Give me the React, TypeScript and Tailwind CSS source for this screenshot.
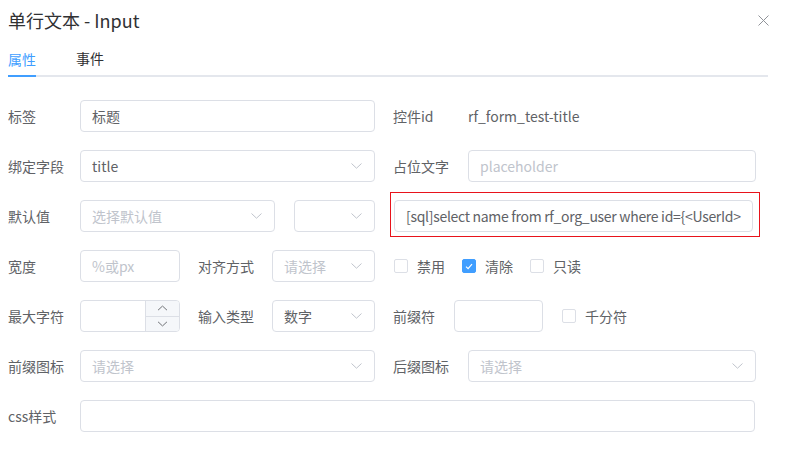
import { useState } from "react";

const FONT = { fontFamily: '"Noto Sans CJK SC", "Noto Sans", sans-serif' };

function Chevron({ up = false, className = "" }: { up?: boolean; className?: string }) {
  return (
    <svg width="11" height="6" viewBox="0 0 11 6" className={className}>
      <path
        d={up ? "M0.5 5.5 L5.5 0.8 L10.5 5.5" : "M0.5 0.5 L5.5 5.2 L10.5 0.5"}
        fill="none"
        stroke="currentColor"
        strokeWidth="1"
      />
    </svg>
  );
}

function TextBox({
  value,
  placeholder,
  className = "",
}: {
  value?: string;
  placeholder?: string;
  className?: string;
}) {
  return (
    <div
      className={`flex h-8 items-center overflow-hidden rounded border border-[#dcdfe6] bg-white px-[11px] text-sm ${className}`}
    >
      {value ? (
        <span className="whitespace-nowrap text-[#606266]">{value}</span>
      ) : (
        <span className="whitespace-nowrap text-[#c0c4cc]">{placeholder}</span>
      )}
    </div>
  );
}

function Select({
  value,
  placeholder,
  className = "",
}: {
  value?: string;
  placeholder?: string;
  className?: string;
}) {
  return (
    <div
      className={`flex h-8 items-center justify-between rounded border border-[#dcdfe6] bg-white pl-[11px] pr-[12px] text-sm ${className}`}
    >
      {value ? (
        <span className="whitespace-nowrap text-[#606266]">{value}</span>
      ) : (
        <span className="whitespace-nowrap text-[#c0c4cc]">{placeholder}</span>
      )}
      <Chevron className="shrink-0 text-[#c0c4cc]" />
    </div>
  );
}

function Check({ label, checked = false }: { label: string; checked?: boolean }) {
  return (
    <label className="flex items-center gap-[9px] text-sm text-[#606266]">
      <span
        className={`flex h-[14px] w-[14px] items-center justify-center rounded-[2px] border ${
          checked ? "border-[#409eff] bg-[#409eff]" : "border-[#dcdfe6] bg-white"
        }`}
      >
        {checked && (
          <svg width="8" height="7" viewBox="0 0 8 7">
            <path d="M1 3.6 L3.1 5.6 L7 1.2" fill="none" stroke="#fff" strokeWidth="1.2" />
          </svg>
        )}
      </span>
      {label}
    </label>
  );
}

function Label({ text, className = "w-[72px]" }: { text: string; className?: string }) {
  return <div className={`shrink-0 text-sm text-[#606266] ${className}`}>{text}</div>;
}

export default function App() {
  const [tab] = useState("属性");

  return (
    <div className="h-[459px] w-[785px] overflow-hidden bg-white px-2" style={FONT}>
      <div className="flex h-[40px] items-center justify-between">
        <h1 className="text-lg text-[#303133]">单行文本 - Input</h1>
        <svg width="11" height="11" viewBox="0 0 11 11" className="mr-[8px] text-[#909399]">
          <path d="M0.5 0.5 L10.5 10.5 M10.5 0.5 L0.5 10.5" stroke="currentColor" strokeWidth="1" />
        </svg>
      </div>

      <div className="mr-[9px] flex h-[37px] items-end border-b-2 border-[#e4e7ed] text-sm">
        <div
          className={`-mb-[2px] flex h-full items-center border-b-2 ${
            tab === "属性" ? "border-[#409eff] text-[#409eff]" : "border-transparent"
          }`}
        >
          属性
        </div>
        <div className="ml-[40px] flex h-full items-center text-[#303133]">事件</div>
      </div>

      <div className="mt-[23px] flex flex-col gap-[18px]">
        {/* row 1 */}
        <div className="flex h-8 items-center">
          <Label text="标签" />
          <TextBox value="标题" className="w-[295px]" />
          <div className="ml-[18px] flex items-center">
            <Label text="控件id" className="w-[75px]" />
            <span className="text-sm text-[#606266]">rf_form_test-title</span>
          </div>
        </div>

        {/* row 2 */}
        <div className="flex h-8 items-center">
          <Label text="绑定字段" />
          <Select value="title" className="w-[295px]" />
          <div className="ml-[18px] flex items-center">
            <Label text="占位文字" className="w-[75px]" />
            <TextBox placeholder="placeholder" className="w-[288px]" />
          </div>
        </div>

        {/* row 3 */}
        <div className="flex h-8 items-center">
          <Label text="默认值" />
          <Select placeholder="选择默认值" className="w-[195px]" />
          <Select className="ml-[19px] w-[81px]" />
          <div className="-mb-[5px] ml-[15px] -mt-2 border border-[#e8131b] pb-[4px] pl-[3px] pr-[6px] pt-[7px]">
            <TextBox
              value="[sql]select name from rf_org_user where id={<UserId>"
              className="w-[359px] tracking-[-0.3px]"
            />
          </div>
        </div>

        {/* row 4 */}
        <div className="flex h-8 items-center">
          <Label text="宽度" />
          <TextBox placeholder="%或px" className="w-[100px]" />
          <Label text="对齐方式" className="ml-[18px] w-[74px]" />
          <Select placeholder="请选择" className="w-[103px]" />
          <div className="ml-[19px] flex items-center gap-[17px]">
            <Check label="禁用" />
            <Check label="清除" checked />
            <Check label="只读" />
          </div>
        </div>

        {/* row 5 */}
        <div className="flex h-8 items-center">
          <Label text="最大字符" />
          <div className="flex h-8 w-[100px] overflow-hidden rounded border border-[#dcdfe6] bg-white">
            <div className="flex-1" />
            <div className="flex w-[34px] flex-col border-l border-[#dcdfe6] bg-[#f5f7fa] text-[#606266]">
              <div className="flex flex-1 items-center justify-center border-b border-[#dcdfe6]">
                <Chevron up className="scale-90" />
              </div>
              <div className="flex flex-1 items-center justify-center">
                <Chevron className="scale-90" />
              </div>
            </div>
          </div>
          <Label text="输入类型" className="ml-[18px] w-[74px]" />
          <Select value="数字" className="w-[103px]" />
          <div className="ml-[18px] flex items-center">
            <Label text="前缀符" className="w-[61px]" />
            <TextBox className="w-[89px]" />
            <div className="ml-[19px]">
              <Check label="千分符" />
            </div>
          </div>
        </div>

        {/* row 6 */}
        <div className="flex h-8 items-center">
          <Label text="前缀图标" />
          <Select placeholder="请选择" className="w-[295px]" />
          <div className="ml-[18px] flex items-center">
            <Label text="后缀图标" className="w-[75px]" />
            <Select placeholder="请选择" className="w-[288px]" />
          </div>
        </div>

        {/* row 7 */}
        <div className="flex h-8 items-center">
          <Label text="css样式" />
          <TextBox className="w-[675px]" />
        </div>
      </div>
    </div>
  );
}
